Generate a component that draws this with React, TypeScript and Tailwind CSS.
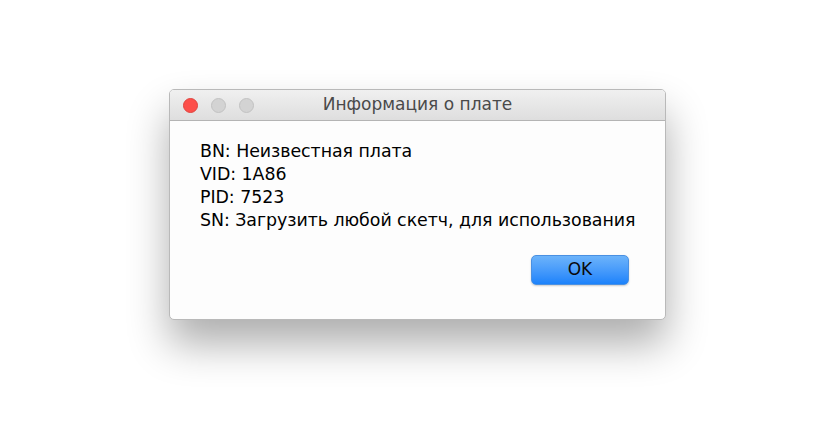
import * as React from "react";

const lines = [
  "BN: Неизвестная плата",
  "VID: 1A86",
  "PID: 7523",
  "SN: Загрузить любой скетч, для использования",
];

export default function App() {
  return (
    <div className="w-[835px] h-[424px] bg-white flex justify-center pt-[89px] font-['DejaVu_Sans',sans-serif]">
      <div className="w-[497px] h-[231px] flex flex-col rounded-[5px] border border-[#b9b9b9] bg-[#fdfdfd] shadow-[0_24px_42px_rgba(0,0,0,0.32)] overflow-hidden">
        {/* Title bar */}
        <div className="h-[31px] flex items-center px-[13px] bg-gradient-to-b from-[#f0f0f0] to-[#dedede] border-b border-[#b4b4b4] relative">
          <div className="flex gap-[13px]">
            <span className="w-[15px] h-[15px] rounded-full bg-[#fd4f4a] border border-[#e0443e]" />
            <span className="w-[15px] h-[15px] rounded-full bg-[#d3d3d3] border border-[#c2c2c2]" />
            <span className="w-[15px] h-[15px] rounded-full bg-[#d3d3d3] border border-[#c2c2c2]" />
          </div>
          <div className="absolute inset-0 flex items-center justify-center text-[17px] text-[#4a4a4a]">
            Информация о плате
          </div>
        </div>

        {/* Body */}
        <div className="flex-1 flex flex-col pl-[30px] pr-[36px] pt-[19px]">
          <div className="flex flex-col text-[17.4px] leading-[22.9px] text-black tracking-[-0.05px] whitespace-nowrap">
            {lines.map((l) => (
              <div key={l}>{l}</div>
            ))}
          </div>
          <div className="flex justify-end mt-[23px]">
            <button className="w-[98px] h-[30px] rounded-[5px] bg-gradient-to-b from-[#6cb3fa] to-[#1a82fb] border border-[#4a90e2] text-[17px] text-[#0a0a0a] shadow-[0_1px_2px_rgba(0,0,0,0.2)]">
              OK
            </button>
          </div>
        </div>
      </div>
    </div>
  );
}
